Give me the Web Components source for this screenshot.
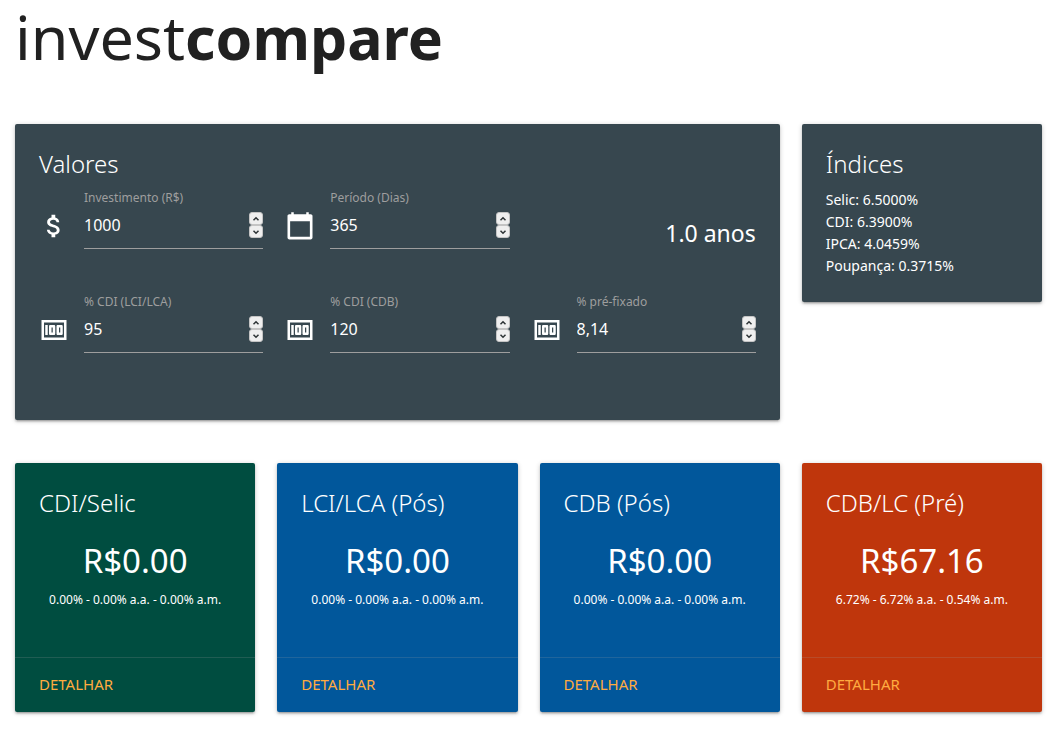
<!DOCTYPE html>
<html lang="pt-BR">
<head>
<meta charset="utf-8">
<meta name="viewport" content="width=device-width, initial-scale=1">
<title>investcompare</title>
<style>
  body {
    margin: 0;
    background: #fff;
    color: #212121;
    font-family: "Noto Sans", "Open Sans", sans-serif;
  }
</style>
</head>
<body>
<invest-app></invest-app>

<template id="tpl-card">
  <style>
    :host {
      display: flex;
      flex-direction: column;
      background: var(--card-color, #37474f);
      color: #fff;
      border-radius: 2px;
      box-shadow: 0 2px 2px 0 rgba(0,0,0,.14), 0 3px 1px -2px rgba(0,0,0,.12), 0 1px 5px 0 rgba(0,0,0,.2);
    }
    .content { padding: 24px; }
    h2 {
      margin: 0 0 8px;
      font-size: 24px;
      font-weight: 300;
      line-height: 32px;
    }
  </style>
  <div class="content" part="content">
    <h2></h2>
    <slot></slot>
  </div>
  <slot name="action"></slot>
</template>

<template id="tpl-field">
  <style>
    :host { display: flex; }
    svg {
      flex: none;
      width: 30px;
      height: 30px;
      margin: 23px 15px 0 0;
      fill: #fff;
    }
    .field { flex: 1; min-width: 0; }
    label {
      display: block;
      font-size: 12px;
      line-height: 20px;
      color: #9e9e9e;
    }
    .box {
      display: flex;
      align-items: center;
      height: 34px;
      padding-bottom: 6px;
      border-bottom: 1px solid #9e9e9e;
    }
    input {
      flex: 1;
      min-width: 0;
      padding: 0;
      border: 0;
      outline: 0;
      background: none;
      color: #fff;
      font: 16px/24px "Noto Sans", "Open Sans", sans-serif;
    }
    .spin { display: flex; flex-direction: column; }
    button {
      display: flex;
      align-items: center;
      justify-content: center;
      width: 14px;
      height: 13px;
      padding: 0;
      border: 1px solid #c4c4c4;
      border-radius: 3px;
      background: #efefef;
    }
    button svg {
      width: 8px;
      height: 6px;
      margin: 0;
      fill: none;
      stroke: #2e3436;
      stroke-width: 1.5;
    }
  </style>
  <svg class="icon" viewBox="0 0 24 24" aria-hidden="true"><path/></svg>
  <div class="field">
    <label for="value"></label>
    <div class="box">
      <input id="value" type="text" inputmode="decimal">
      <div class="spin">
        <button type="button" class="up" aria-label="Aumentar"><svg viewBox="0 0 8 6"><path d="M1.5 4.3 4 1.8 6.5 4.3"/></svg></button>
        <button type="button" class="down" aria-label="Diminuir"><svg viewBox="0 0 8 6"><path d="M1.5 1.7 4 4.2 6.5 1.7"/></svg></button>
      </div>
    </div>
  </div>
</template>

<template id="tpl-result">
  <style>
    :host { display: block; }
    ic-card::part(content) { flex: 1; }
    .value {
      margin: 0;
      padding-top: 12px;
      text-align: center;
      font-size: 33px;
      line-height: 44px;
    }
    .rates {
      margin: 0;
      padding: 8px 0 24px;
      text-align: center;
      font-size: 12px;
      line-height: 18px;
      white-space: nowrap;
    }
    .action {
      padding: 16px 24px 18px;
      border-top: 1px solid rgba(160,160,160,.2);
    }
    a {
      display: block;
      color: #ffab40;
      font-size: 15px;
      line-height: 20px;
      text-decoration: none;
      text-transform: uppercase;
    }
  </style>
  <ic-card>
    <p class="value"></p>
    <p class="rates"></p>
    <div class="action" slot="action"><a href="#detalhar">Detalhar</a></div>
  </ic-card>
</template>

<template id="tpl-indices">
  <style>
    :host { display: block; }
    ul {
      margin: 0;
      padding: 1px 0;
      list-style: none;
      font-size: 14px;
      line-height: 22px;
    }
  </style>
  <ic-card heading="Índices">
    <ul>
      <li>Selic: 6.5000%</li>
      <li>CDI: 6.3900%</li>
      <li>IPCA: 4.0459%</li>
      <li>Poupança: 0.3715%</li>
    </ul>
  </ic-card>
</template>

<template id="tpl-values">
  <style>
    :host { display: block; }
    form {
      display: grid;
      grid-template-columns: repeat(3, minmax(0, 1fr));
      gap: 43px 22px;
      padding-bottom: 43px;
    }
    output {
      padding-top: 29px;
      text-align: right;
      font-size: 23px;
      line-height: 32px;
    }
  </style>
  <ic-card heading="Valores">
    <form>
      <ic-field icon="dollar" label="Investimento (R$)" value="1000"></ic-field>
      <ic-field icon="calendar" label="Período (Dias)" value="365"></ic-field>
      <output>1.0 anos</output>
      <ic-field icon="money" label="% CDI (LCI/LCA)" value="95"></ic-field>
      <ic-field icon="money" label="% CDI (CDB)" value="120"></ic-field>
      <ic-field icon="money" label="% pré-fixado" value="8,14"></ic-field>
    </form>
  </ic-card>
</template>

<template id="tpl-app">
  <style>
    :host { display: block; padding: 0 19px 18px 15px; }
    h1 {
      margin: 0 0 51px;
      font-size: 61px;
      font-weight: 400;
      line-height: 73px;
    }
    h1 b {
      font-size: 59px;
      font-weight: 700;
      line-height: 59px;
    }
    main {
      display: grid;
      grid-template-columns: repeat(4, minmax(0, 1fr));
      gap: 43px 22px;
      align-items: start;
    }
    ic-values { grid-column: span 3; }
    .green { --card-color: #004d40; }
    .blue { --card-color: #01579b; }
    .orange { --card-color: #bf360c; }
  </style>
  <h1>invest<b>compare</b></h1>
  <main>
    <ic-values></ic-values>
    <ic-indices></ic-indices>
    <ic-result class="green" heading="CDI/Selic" value="R$0.00" rates="0.00% - 0.00% a.a. - 0.00% a.m."></ic-result>
    <ic-result class="blue" heading="LCI/LCA (Pós)" value="R$0.00" rates="0.00% - 0.00% a.a. - 0.00% a.m."></ic-result>
    <ic-result class="blue" heading="CDB (Pós)" value="R$0.00" rates="0.00% - 0.00% a.a. - 0.00% a.m."></ic-result>
    <ic-result class="orange" heading="CDB/LC (Pré)" value="R$67.16" rates="6.72% - 6.72% a.a. - 0.54% a.m."></ic-result>
  </main>
</template>

<script>
  const ICONS = {
    dollar: 'M11.8 10.9c-2.27-.59-3-1.2-3-2.15 0-1.09 1.01-1.85 2.7-1.85 1.78 0 2.44.85 2.5 2.1h2.21c-.07-1.72-1.12-3.3-3.21-3.81V3h-3v2.16c-1.94.42-3.5 1.68-3.5 3.61 0 2.31 1.91 3.46 4.7 4.13 2.5.6 3 1.48 3 2.41 0 .69-.49 1.79-2.7 1.79-2.06 0-2.87-.92-2.98-2.1h-2.2c.12 2.19 1.76 3.42 3.68 3.83V21h3v-2.15c1.95-.37 3.5-1.5 3.5-3.55 0-2.84-2.43-3.81-4.7-4.4z',
    calendar: 'M20.5 2.5H19V1h-2v1.500H7V1H5v1.500H3.500C2.600 2.500 2 3.100 2 4v17.200c0 .9.6 1.500 1.500 1.500h17c.9 0 1.500-.6 1.500-1.500V4c0-.9-.6-1.500-1.500-1.500zm-.6 18H4.100V8.200h15.800v12.300z',
    money: 'M5 8h2v8H5zM12 8H9c-.55 0-1 .45-1 1v6c0 .55.45 1 1 1h3c.55 0 1-.45 1-1V9c0-.55-.45-1-1-1zm-1 6h-1v-4h1v4zM18 8h-3c-.55 0-1 .45-1 1v6c0 .55.45 1 1 1h3c.55 0 1-.45 1-1V9c0-.55-.45-1-1-1zm-1 6h-1v-4h1v4zM2 4v16h20V4H2zm2 14V6h16v12H4z'
  };

  class Base extends HTMLElement {
    constructor() {
      super();
      const tpl = document.getElementById(this.constructor.template);
      this.attachShadow({ mode: 'open' }).append(tpl.content.cloneNode(true));
    }
    $(selector) { return this.shadowRoot.querySelector(selector); }
  }

  class Card extends Base {
    static template = 'tpl-card';
    static observedAttributes = ['heading'];
    attributeChangedCallback(name, old, value) { this.$('h2').textContent = value; }
  }

  class Field extends Base {
    static template = 'tpl-field';
    connectedCallback() {
      const input = this.$('input');
      this.$('label').textContent = this.getAttribute('label');
      this.$('.icon path').setAttribute('d', ICONS[this.getAttribute('icon')]);
      input.value = this.getAttribute('value');
      const step = by => {
        const next = parseFloat(input.value.replace(',', '.')) + by;
        input.value = String(Math.round(next * 100) / 100).replace('.', ',');
      };
      this.$('.up').onclick = () => step(1);
      this.$('.down').onclick = () => step(-1);
    }
  }

  class Result extends Base {
    static template = 'tpl-result';
    connectedCallback() {
      this.$('ic-card').setAttribute('heading', this.getAttribute('heading'));
      this.$('.value').textContent = this.getAttribute('value');
      this.$('.rates').textContent = this.getAttribute('rates');
    }
  }

  class Indices extends Base { static template = 'tpl-indices'; }
  class Values extends Base { static template = 'tpl-values'; }
  class App extends Base { static template = 'tpl-app'; }

  customElements.define('ic-card', Card);
  customElements.define('ic-field', Field);
  customElements.define('ic-result', Result);
  customElements.define('ic-indices', Indices);
  customElements.define('ic-values', Values);
  customElements.define('invest-app', App);
</script>
</body>
</html>
